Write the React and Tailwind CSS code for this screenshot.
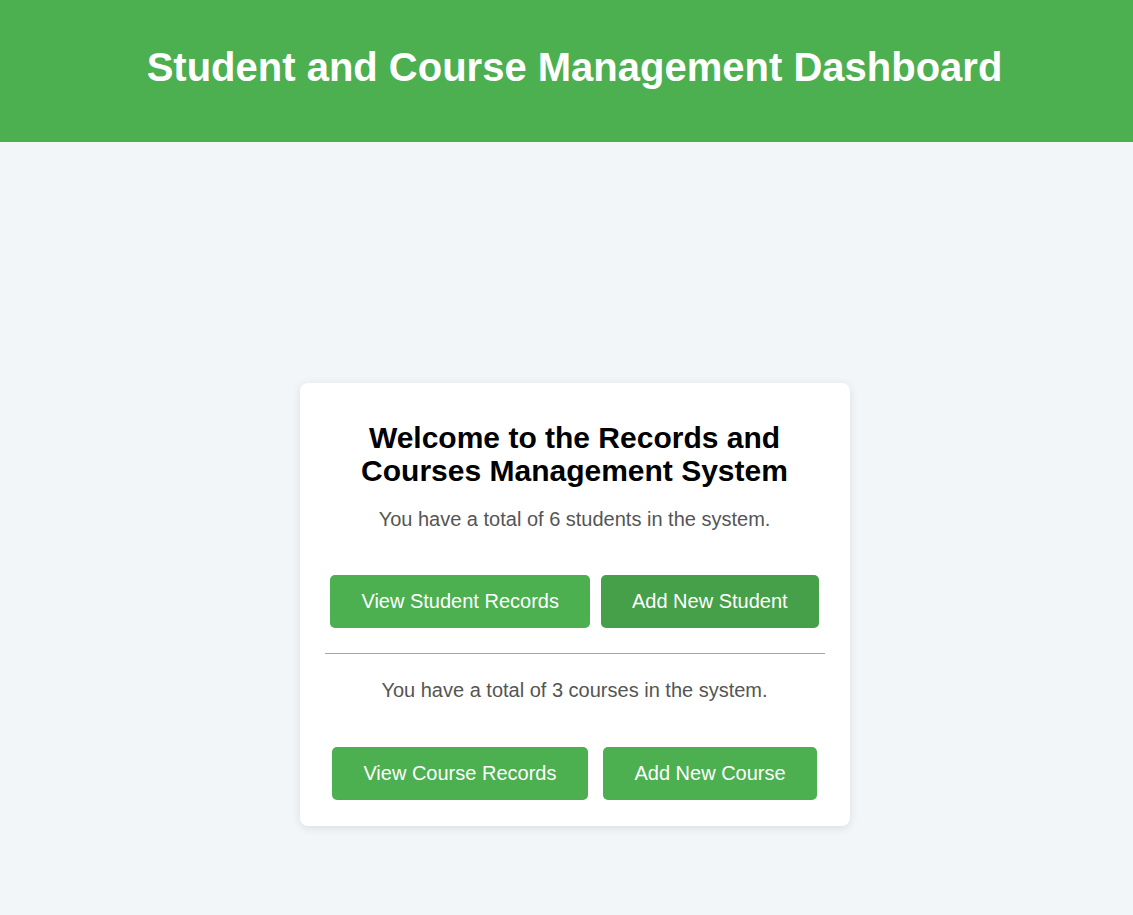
import React from 'react';

const btn = 'py-[15px] text-[20px] leading-[23px] text-white rounded-[5px]';

const App = () => {
  return (
    <div className="min-h-screen bg-[#f3f6f9] font-['Liberation_Sans',Arial,sans-serif]">
      <header className="bg-[#4caf50] h-[142px] flex items-center justify-center pl-[16px]">
        <h1 className="text-[40px] font-bold text-white leading-[46px] -mt-[8px]">
          Student and Course Management Dashboard
        </h1>
      </header>

      <main className="flex justify-center pl-[16px] pt-[241px] pb-[89px]">
        <div className="w-[550px] bg-white rounded-[8px] shadow-[0_2px_10px_rgba(0,0,0,0.1)] pt-[38px] px-[25px] pb-[26px] text-center">
          <h2 className="text-[30px] font-bold text-black leading-[33px] px-[10px]">
            Welcome to the Records and Courses Management System
          </h2>
          <p className="mt-[21px] text-[20px] leading-[23px] text-[#555]">
            You have a total of 6 students in the system.
          </p>

          {/* students */}
          <div className="mt-[44px] flex justify-center gap-[11px]">
            <button className={`${btn} px-[31px] bg-[#4caf50]`}>View Student Records</button>
            <button className={`${btn} px-[31px] bg-[#45a049]`}>Add New Student</button>
          </div>

          <hr className="mt-[25px] border-0 border-t border-[#a6a6a6]" />

          <p className="mt-[25px] text-[20px] leading-[23px] text-[#555]">
            You have a total of 3 courses in the system.
          </p>

          {/* courses */}
          <div className="mt-[45px] flex justify-center gap-[15px]">
            <button className={`${btn} px-[31.5px] bg-[#4caf50]`}>View Course Records</button>
            <button className={`${btn} px-[31.5px] bg-[#4caf50]`}>Add New Course</button>
          </div>
        </div>
      </main>
    </div>
  );
};

export default App;
